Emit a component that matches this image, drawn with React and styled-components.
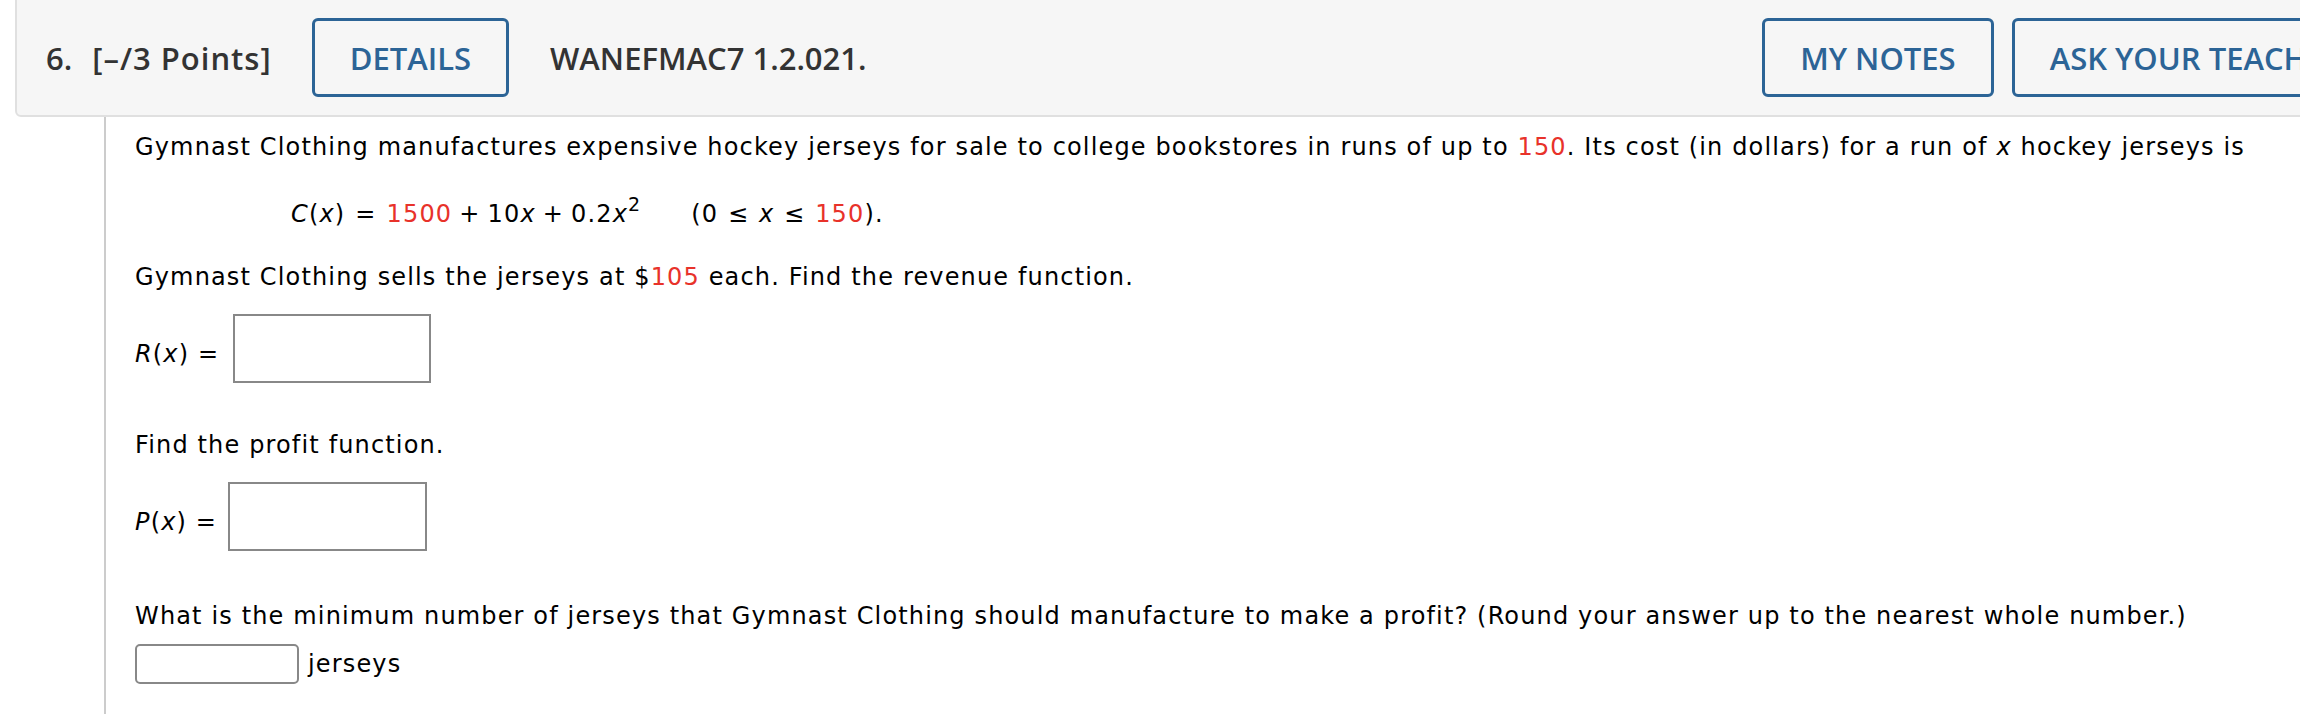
import React from "react";
import styled, { createGlobalStyle } from "styled-components";

const GlobalStyle = createGlobalStyle`
  html, body {
    margin: 0;
    padding: 0;
    background: #ffffff;
    overflow: hidden;
  }
  body {
    font-family: "DejaVu Sans", Verdana, sans-serif;
  }
`;

const Page = styled.div`
  width: 2440px;
`;

const Header = styled.div`
  box-sizing: border-box;
  margin: -6px 0 0 15px;
  width: 2398px;
  height: 123px;
  padding: 4px 29px 0 29px;
  background: #f6f6f6;
  border: 2px solid #e0e0e0;
  border-radius: 6px;
  display: flex;
  align-items: center;
  font-family: "Open Sans", "Liberation Sans", sans-serif;
  font-weight: 600;
  font-size: 31px;
  color: #333333;
`;

const Num = styled.span`
  margin-right: 20px;
`;

const Points = styled.span`
  margin-right: 40px;
  letter-spacing: 1px;
`;

const Title = styled.span`
  margin-left: 41px;
`;

const RightGroup = styled.div`
  margin-left: auto;
  display: flex;
  gap: 18px;
`;

const OutlineButton = styled.button`
  box-sizing: border-box;
  height: 79px;
  padding: 0 35px;
  background: transparent;
  border: 3px solid #2c6496;
  border-radius: 6px;
  color: #2c6496;
  font-family: "Open Sans", "Liberation Sans", sans-serif;
  font-weight: 600;
  font-size: 31px;
  white-space: nowrap;
  cursor: pointer;
`;

const Body = styled.div`
  margin-left: 104px;
  border-left: 2px solid #cccccc;
  padding: 13px 0 40px 29px;
  font-size: 24px;
  letter-spacing: 1.15px;
  line-height: 34px;
  color: #000000;
`;

const Para = styled.p`
  margin: ${(p) => p.$top || 0}px 0 0 0;
  white-space: nowrap;
`;

const Formula = styled.p`
  margin: ${(p) => p.$top || 0}px 0 0 0;
  padding-left: 156px;
  white-space: nowrap;
`;

const Red = styled.span`
  color: #e8322a;
`;

const Var = styled.i`
  font-style: italic;
`;

const Sup = styled.sup`
  font-size: 19px;
  line-height: 0;
  vertical-align: 11px;
`;

const Op = styled.span`
  margin: 0 ${(p) => p.$space || 7}px;
`;

const Domain = styled.span`
  margin-left: 50px;
  word-spacing: 1px;
`;

const AnswerRow = styled.div`
  margin-top: ${(p) => p.$top || 0}px;
  display: flex;
  align-items: ${(p) => (p.$center ? "center" : "flex-end")};
  gap: ${(p) => p.$gap || 12}px;
`;

const Label = styled.span`
  margin-bottom: ${(p) => p.$bottom || 0}px;
  white-space: nowrap;
`;

const BigInput = styled.input`
  box-sizing: border-box;
  width: ${(p) => p.$w}px;
  height: 69px;
  border: 2px solid #888888;
  border-radius: 0;
  background: #ffffff;
  margin: 0;
`;

const SmallInput = styled.input`
  box-sizing: border-box;
  width: 164px;
  height: 40px;
  border: 2px solid #888888;
  border-radius: 5px;
  background: #ffffff;
  margin: 0;
`;

export default function App() {
  return (
    <Page>
      <GlobalStyle />
      <Header>
        <Num>6.</Num>
        <Points>[–/3 Points]</Points>
        <OutlineButton>DETAILS</OutlineButton>
        <Title>WANEFMAC7 1.2.021.</Title>
        <RightGroup>
          <OutlineButton>MY NOTES</OutlineButton>
          <OutlineButton>ASK YOUR TEACHER</OutlineButton>
        </RightGroup>
      </Header>
      <Body>
        <Para>
          Gymnast Clothing manufactures expensive hockey jerseys for sale to college bookstores in runs of up to{" "}
          <Red>150</Red>. Its cost (in dollars) for a run of <Var>x</Var> hockey jerseys is
        </Para>
        <Formula $top={33}>
          <Var>C</Var>(<Var>x</Var>)<Op $space={10}>=</Op>
          <Red>1500</Red>
          <Op>+</Op>10<Var>x</Var>
          <Op>+</Op>0.2<Var>x</Var>
          <Sup>2</Sup>
          <Domain>
            (0 ≤ <Var>x</Var> ≤ <Red>150</Red>).
          </Domain>
        </Formula>
        <Para $top={29}>
          Gymnast Clothing sells the jerseys at $<Red>105</Red> each. Find the revenue function.
        </Para>
        <AnswerRow $top={20} $gap={14}>
          <Label $bottom={12}>
            <Var>R</Var>(<Var>x</Var>) =
          </Label>
          <BigInput $w={198} />
        </AnswerRow>
        <Para $top={45}>Find the profit function.</Para>
        <AnswerRow $top={20} $gap={11}>
          <Label $bottom={12}>
            <Var>P</Var>(<Var>x</Var>) =
          </Label>
          <BigInput $w={199} />
        </AnswerRow>
        <Para $top={48}>
          What is the minimum number of jerseys that Gymnast Clothing should manufacture to make a profit? (Round
          your answer up to the nearest whole number.)
        </Para>
        <AnswerRow $top={11} $gap={9} $center>
          <SmallInput />
          <Label>jerseys</Label>
        </AnswerRow>
      </Body>
    </Page>
  );
}
